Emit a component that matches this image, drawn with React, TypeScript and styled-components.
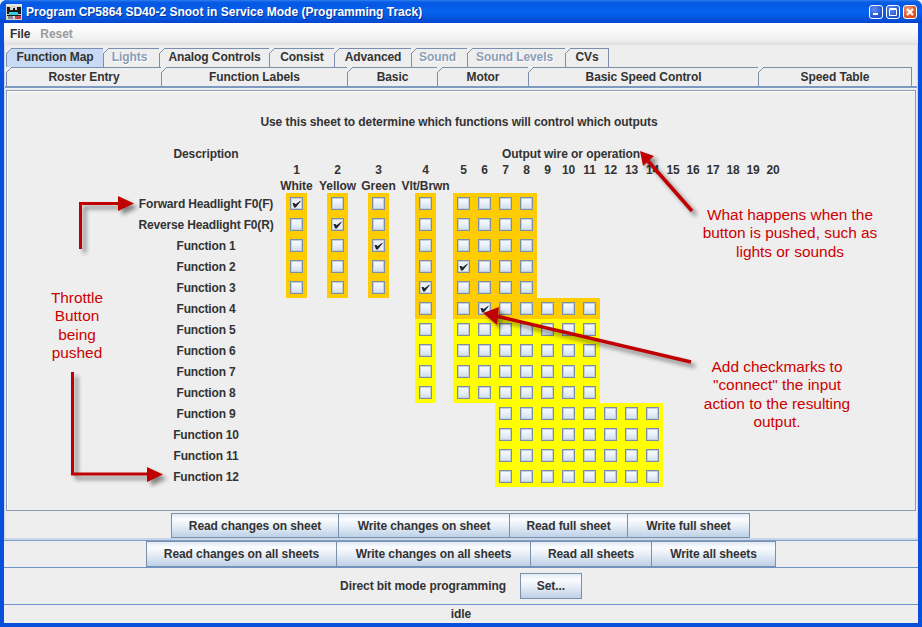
import React from 'react';
import styled, { createGlobalStyle } from 'styled-components';

const GlobalStyle = createGlobalStyle`
  html, body {
    margin: 0;
    padding: 0;
    width: 922px;
    height: 627px;
    overflow: hidden;
    background: #eeeeee;
  }
  * { box-sizing: border-box; }
`;

const Window = styled.div`
  position: relative;
  width: 922px;
  height: 627px;
  display: flex;
  flex-direction: column;
  background: #0850dc;
  border-radius: 7px 7px 0 0;
  overflow: hidden;
  font-family: "Liberation Sans", Arial, sans-serif;
  font-size: 12px;
  font-weight: 700;
  letter-spacing: -0.08px;
  color: #333333;
`;

const TitleBar = styled.div`
  height: 23px;
  flex: none;
  display: flex;
  align-items: center;
  padding: 0 5px 0 6px;
  background: linear-gradient(#2f7fee 0, #0a5ce6 2px, #0458e4 5px, #0563ee 11px, #0458e0 17px, #0345cf 23px);
`;

const TitleText = styled.div`
  margin-left: 4px;
  flex: 1;
  font-size: 12px;
  font-weight: 700;
  letter-spacing: 0;
  color: #ffffff;
  text-shadow: 1px 1px 0 #0a2f9a;
  white-space: nowrap;
`;

const WinButtons = styled.div`
  display: flex;
  gap: 3px;
`;

const WinButton = styled.div<{ $close?: boolean }>`
  width: 14px;
  height: 14px;
  border: 1px solid #ffffff;
  border-radius: 3px;
  background: ${(p) =>
    p.$close
      ? 'radial-gradient(circle at 35% 30%, #f0a080, #dc4a20 70%)'
      : 'radial-gradient(circle at 35% 30%, #5c8cf0, #1f50d0 75%)'};
  display: flex;
  align-items: center;
  justify-content: center;
`;

const Main = styled.div`
  flex: 1;
  margin: 0 4px 4px;
  display: flex;
  flex-direction: column;
  background: #eeeeee;
`;

const MenuBar = styled.div`
  height: 22px;
  flex: none;
  display: flex;
  align-items: center;
  gap: 10px;
  padding: 0 0 1px 6px;
  background: linear-gradient(#ffffff 0, #f8f8f8 45%, #f0f0f0 75%, #dedede 100%);
`;

const MenuItem = styled.span<{ $disabled?: boolean }>`
  color: ${(p) => (p.$disabled ? '#999999' : '#333333')};
`;

const Sheet = styled.div`
  height: 495px;
  flex: none;
  display: flex;
  flex-direction: column;
  padding: 3px 2px 0;
  border-bottom: 2px solid #c9d6e8;
  box-shadow: inset 1px 0 0 #c9d6e8, inset -1px 0 0 #c9d6e8;
`;

const TabRow = styled.div`
  height: 19px;
  flex: none;
  display: flex;
`;

const Tab = styled.div<{ $w: number; $selected?: boolean; $disabled?: boolean }>`
  position: relative;
  width: ${(p) => p.$w}px;
  flex: none;
  display: flex;
  align-items: center;
  justify-content: center;
  padding-bottom: 2px;
  padding-right: ${(p) => (p.$disabled ? 4 : 0)}px;
  border: 1px solid #7a8fad;
  border-bottom: none;
  border-right: none;
  background: ${(p) => (p.$selected ? '#c8daf4' : '#eeeeee')};
  color: ${(p) => (p.$disabled ? '#8b9db5' : '#333333')};
  text-shadow: ${(p) => (p.$disabled ? '1px 1px 0 #ffffff' : 'none')};

  &:last-child {
    border-right: 1px solid #7a8fad;
  }

  &::before {
    content: '';
    position: absolute;
    left: -1px;
    top: -1px;
    width: 6px;
    height: 6px;
    background: linear-gradient(135deg, #eeeeee 0 42%, #7a8fad 42% 58%, transparent 58%);
  }
`;

const LowerTab = styled(Tab)`
  padding-bottom: 1px;
`;

const TabRule = styled.div`
  height: 2px;
  flex: none;
  margin: 0 -1px;
  background: #7f9ac0;
`;

const Panel = styled.div`
  height: 421px;
  flex: none;
  margin-top: 2px;
  border: 1px solid #8b9bb2;
  box-shadow: inset 1px 1px 0 #ffffff;
  display: flex;
  flex-direction: column;
`;

const Heading = styled.div`
  height: 16px;
  line-height: 16px;
  margin-top: 23px;
  text-align: center;
  padding-right: 4px;
`;

const MapGrid = styled.div`
  margin: 16px 0 0 129px;
  display: grid;
  grid-template-columns: 140px 41px 41px 41px 53px 1px repeat(10, 21px) repeat(6, 20px);
  grid-template-rows: 16px 16px 15px repeat(14, 21px);
`;

const HeadText = styled.div<{ $col: number; $row: number }>`
  grid-column: ${(p) => p.$col};
  grid-row: ${(p) => p.$row};
  line-height: 16px;
  text-align: center;
  white-space: nowrap;
`;

const WireTitle = styled.div`
  grid-column: 9 / span 14;
  grid-row: 1;
  justify-self: start;
  margin-left: 7px;
  line-height: 16px;
  white-space: nowrap;
`;

const RowLabel = styled.div<{ $row: number }>`
  grid-column: 1;
  grid-row: ${(p) => p.$row};
  padding-top: 1px;
  line-height: 21px;
  text-align: center;
  white-space: nowrap;
  letter-spacing: -0.16px;
`;

const Cell = styled.div<{ $col: number; $row: number; $zone: 'orange' | 'yellow' }>`
  grid-column: ${(p) => p.$col};
  grid-row: ${(p) => p.$row};
  justify-self: center;
  width: 21px;
  height: 21px;
  display: flex;
  align-items: center;
  justify-content: center;
  background: ${(p) => (p.$zone === 'orange' ? '#ffcc00' : '#ffff00')};
`;

const Check = styled.div<{ $on?: boolean }>`
  width: 13px;
  height: 13px;
  border: 1px solid #7c8da6;
  box-shadow: inset 0 0 0 1px #c4cfdc;
  background: ${(p) =>
    p.$on ? '#eef0f4' : 'linear-gradient(#f8fafd 0, #eef3f9 40%, #cfdeee 100%)'};
  display: flex;
  align-items: center;
  justify-content: center;
`;

const ButtonRow = styled.div<{ $h: number }>`
  height: ${(p) => p.$h}px;
  flex: none;
  display: flex;
  justify-content: center;
  align-items: flex-start;
`;

const Button = styled.div<{ $w: number; $h?: number }>`
  width: ${(p) => p.$w}px;
  height: ${(p) => p.$h ?? 25}px;
  flex: none;
  display: flex;
  align-items: center;
  justify-content: center;
  margin-left: -1px;
  border: 1px solid #7a8fa8;
  background: linear-gradient(#dfe9f5 0, #fbfcfe 22%, #e8eff7 50%, #bdd1e7 100%);

  &:first-child {
    margin-left: 0;
  }
`;

const SheetButtons = styled(ButtonRow)`
  margin-top: 2px;
  padding-right: 1px;
`;

const AllSheets = styled(ButtonRow)`
  border-top: 1px solid #7f9dc9;
  border-bottom: 1px solid #6f92c9;
`;

const DirectRow = styled.div`
  height: 37px;
  flex: none;
  display: flex;
  align-items: center;
  justify-content: center;
  gap: 15px;
  border-bottom: 1px solid #6f92c9;
`;

const Status = styled.div`
  flex: 1;
  display: flex;
  align-items: center;
  justify-content: center;
`;

const Overlay = styled.svg`
  position: absolute;
  left: 0;
  top: 0;
  pointer-events: none;
  filter: drop-shadow(4px 4px 2px rgba(0, 0, 0, 0.45));
`;

const Note = styled.div<{ $x: number; $y: number; $w: number }>`
  position: absolute;
  left: ${(p) => p.$x}px;
  top: ${(p) => p.$y}px;
  width: ${(p) => p.$w}px;
  font-size: 15.4px;
  font-weight: 400;
  letter-spacing: 0;
  line-height: 18.3px;
  text-align: center;
  color: #cc0000;
`;

const topTabs = [
  { label: 'Function Map', w: 97, selected: true },
  { label: 'Lights', w: 56, disabled: true },
  { label: 'Analog Controls', w: 110 },
  { label: 'Consist', w: 65 },
  { label: 'Advanced', w: 77 },
  { label: 'Sound', w: 56, disabled: true },
  { label: 'Sound Levels', w: 98, disabled: true },
  { label: 'CVs', w: 44 },
];

const lowerTabs = [
  { label: 'Roster Entry', w: 155 },
  { label: 'Function Labels', w: 186 },
  { label: 'Basic', w: 90 },
  { label: 'Motor', w: 91 },
  { label: 'Basic Speed Control', w: 230 },
  { label: 'Speed Table', w: 154 },
];

const wireNames = ['White', 'Yellow', 'Green', 'Vlt/Brwn'];

const rowLabels = [
  'Forward Headlight F0(F)',
  'Reverse Headlight F0(R)',
  'Function 1',
  'Function 2',
  'Function 3',
  'Function 4',
  'Function 5',
  'Function 6',
  'Function 7',
  'Function 8',
  'Function 9',
  'Function 10',
  'Function 11',
  'Function 12',
];

const checked = ['0-1', '1-2', '2-3', '4-4', '3-5', '5-6'];

// grid line of output n, line 6 is only the small spacer after column 4
const colLine = (n: number) => (n <= 4 ? n + 1 : n + 2);

const zoneOf = (row: number, col: number): 'orange' | 'yellow' | null => {
  if (col <= 3) return row <= 4 ? 'orange' : null;
  if (col <= 8) {
    if (row <= 5) return 'orange';
    if (row <= 9) return 'yellow';
    return row >= 10 && col >= 7 ? 'yellow' : null;
  }
  if (col <= 11) {
    if (row < 5) return null;
    return row === 5 ? 'orange' : 'yellow';
  }
  if (col <= 14) return row >= 10 ? 'yellow' : null;
  return null;
};

const Tick = () => (
  <svg width="9" height="9" viewBox="0 0 9 9">
    <path d="M0.5 4 L2.5 4 L3.5 5.2 L8.5 1.5 L8.5 2.4 L3.8 8.5 L2 8.5 Z" fill="#1c2430" />
  </svg>
);

const LocoIcon = () => (
  <svg width="16" height="16" viewBox="0 0 16 16">
    <rect width="16" height="16" fill="#d8d4cc" />
    <rect x="0" y="0" width="16" height="2" fill="#e8e8ec" />
    <path d="M1 3h3v3h3V4h2v2h2V3h4v7H1z" fill="#1a1a1a" />
    <rect x="3" y="8" width="9" height="3" fill="#30d0e0" />
    <rect x="1" y="11" width="14" height="1" fill="#1a1a1a" />
    <rect x="9" y="12" width="6" height="3" fill="#c04050" />
    <rect x="2" y="12" width="5" height="3" fill="#888890" />
  </svg>
);

const Arrows = () => (
  <Overlay width="922" height="627" viewBox="0 0 922 627">
    <g fill="none" stroke="#c00000" strokeWidth="3">
      <path d="M80.5 249 V203.5 H120" />
      <path d="M72.5 372 V474 H150" />
      <path d="M692 211 L648 161" strokeWidth="3.5" />
      <path d="M691 362 L496 316" strokeWidth="3.5" />
    </g>
    <g fill="#c00000">
      <path d="M118 196 L134 203.5 L118 211 Z" />
      <path d="M147 467 L163 474.5 L147 482 Z" />
      <path d="M640 151 L654 156 L643 166 Z" />
      <path d="M483 313 L499 307 L497 325 Z" />
    </g>
  </Overlay>
);

const App = () => {
  return (
    <Window>
      <GlobalStyle />
      <TitleBar>
        <LocoIcon />
        <TitleText>Program CP5864 SD40-2 Snoot in Service Mode (Programming Track)</TitleText>
        <WinButtons>
          <WinButton>
            <svg width="8" height="8" viewBox="0 0 8 8">
              <rect x="1" y="5" width="5" height="2" fill="#ffffff" />
            </svg>
          </WinButton>
          <WinButton>
            <svg width="10" height="10" viewBox="0 0 10 10">
              <path d="M1.5 2.5h7v6h-7z M1.5 1.5h7" fill="none" stroke="#ffffff" />
            </svg>
          </WinButton>
          <WinButton $close>
            <svg width="10" height="10" viewBox="0 0 10 10">
              <path d="M2 2 L8 8 M8 2 L2 8" stroke="#ffffff" strokeWidth="2" />
            </svg>
          </WinButton>
        </WinButtons>
      </TitleBar>

      <Main>
        <MenuBar>
          <MenuItem>File</MenuItem>
          <MenuItem $disabled>Reset</MenuItem>
        </MenuBar>

        <Sheet>
          <TabRow>
            {topTabs.map((t) => (
              <Tab key={t.label} $w={t.w} $selected={t.selected} $disabled={t.disabled}>
                {t.label}
              </Tab>
            ))}
          </TabRow>
          <TabRow>
            {lowerTabs.map((t) => (
              <LowerTab key={t.label} $w={t.w}>
                {t.label}
              </LowerTab>
            ))}
          </TabRow>
          <TabRule />
          <Panel>
            <Heading>Use this sheet to determine which functions will control which outputs</Heading>
            <MapGrid>
              <HeadText $col={1} $row={1}>Description</HeadText>
              <WireTitle>Output wire or operation</WireTitle>
              {Array.from({ length: 20 }, (_, i) => (
                <HeadText key={i} $col={colLine(i + 1)} $row={2}>
                  {i + 1}
                </HeadText>
              ))}
              {wireNames.map((name, i) => (
                <HeadText key={name} $col={colLine(i + 1)} $row={3}>
                  {name}
                </HeadText>
              ))}
              {rowLabels.map((label, r) => (
                <React.Fragment key={label}>
                  <RowLabel $row={r + 4}>{label}</RowLabel>
                  {Array.from({ length: 14 }, (_, c) => {
                    const zone = zoneOf(r, c + 1);
                    if (!zone) return null;
                    const on = checked.includes(`${r}-${c + 1}`);
                    return (
                      <Cell key={c} $col={colLine(c + 1)} $row={r + 4} $zone={zone}>
                        <Check $on={on}>{on && <Tick />}</Check>
                      </Cell>
                    );
                  })}
                </React.Fragment>
              ))}
            </MapGrid>
          </Panel>
          <SheetButtons $h={25}>
            <Button $w={168}>Read changes on sheet</Button>
            <Button $w={172}>Write changes on sheet</Button>
            <Button $w={119}>Read full sheet</Button>
            <Button $w={123}>Write full sheet</Button>
          </SheetButtons>
        </Sheet>

        <AllSheets $h={28}>
          <Button $w={191} $h={26}>Read changes on all sheets</Button>
          <Button $w={195} $h={26}>Write changes on all sheets</Button>
          <Button $w={122} $h={26}>Read all sheets</Button>
          <Button $w={125} $h={26}>Write all sheets</Button>
        </AllSheets>

        <DirectRow>
          <span>Direct bit mode programming</span>
          <Button $w={62} $h={26}>Set...</Button>
        </DirectRow>

        <Status>idle</Status>
      </Main>

      <Arrows />
      <Note $x={27} $y={289} $w={100}>Throttle<br />Button<br />being<br />pushed</Note>
      <Note $x={690} $y={206} $w={200}>What happens when the<br />button is pushed, such as<br />lights or sounds</Note>
      <Note $x={677} $y={358} $w={200}>Add checkmarks to<br />"connect" the input<br />action to the resulting<br />output.</Note>
    </Window>
  );
};

export default App;
